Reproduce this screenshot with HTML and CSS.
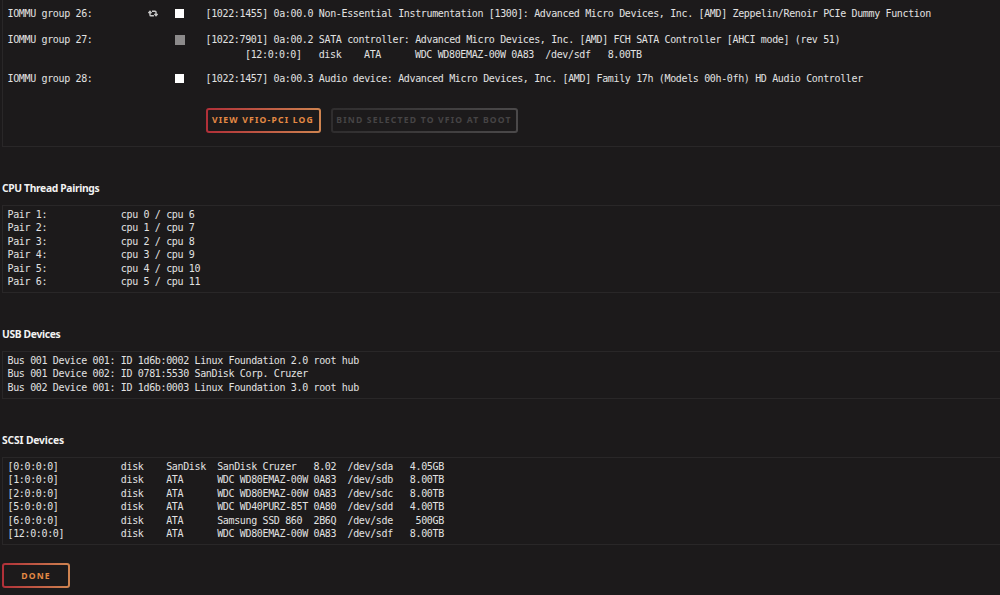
FILE: index.html
```
<!DOCTYPE html>
<html lang="en">
<head>
    <meta charset="UTF-8">
    <meta name="viewport" content="width=device-width, initial-scale=1.0">
    <title>System Devices</title>
    <link rel="stylesheet" href="styles.css">
</head>
<body>
    <div class="panel iommu">
        <div class="group">
            <span>IOMMU group 26:</span>
            <svg class="reset" viewBox="0 0 10 7">
                <path d="M2 1.4v3.5q0 .9.9.9h3M.4 3.1 2 1.3l1.6 1.8M4 1.2h3q1 0 1 .9v3M6.4 3.9 8 5.7l1.6-1.8"/>
            </svg>
            <span class="check"></span>
            <pre>[1022:1455] 0a:00.0 Non-Essential Instrumentation [1300]: Advanced Micro Devices, Inc. [AMD] Zeppelin/Renoir PCIe Dummy Function</pre>
        </div>
        <div class="group">
            <span>IOMMU group 27:</span>
            <span></span>
            <span class="check disabled"></span>
            <pre>[1022:7901] 0a:00.2 SATA controller: Advanced Micro Devices, Inc. [AMD] FCH SATA Controller [AHCI mode] (rev 51)</pre>
            <pre class="drive">[12:0:0:0]   disk    ATA      WDC WD80EMAZ-00W 0A83  /dev/sdf   8.00TB</pre>
        </div>
        <div class="group">
            <span>IOMMU group 28:</span>
            <span></span>
            <span class="check"></span>
            <pre>[1022:1457] 0a:00.3 Audio device: Advanced Micro Devices, Inc. [AMD] Family 17h (Models 00h-0fh) HD Audio Controller</pre>
        </div>
        <div class="buttons">
            <button class="btn log-btn">VIEW VFIO-PCI LOG</button>
            <button class="btn bind-btn" disabled>BIND SELECTED TO VFIO AT BOOT</button>
        </div>
    </div>

    <h2>CPU Thread Pairings</h2>
    <pre class="panel">
Pair 1:             cpu 0 / cpu 6
Pair 2:             cpu 1 / cpu 7
Pair 3:             cpu 2 / cpu 8
Pair 4:             cpu 3 / cpu 9
Pair 5:             cpu 4 / cpu 10
Pair 6:             cpu 5 / cpu 11</pre>

    <h2>USB Devices</h2>
    <pre class="panel usb">
Bus 001 Device 001: ID 1d6b:0002 Linux Foundation 2.0 root hub
Bus 001 Device 002: ID 0781:5530 SanDisk Corp. Cruzer
Bus 002 Device 001: ID 1d6b:0003 Linux Foundation 3.0 root hub</pre>

    <h2 class="scsi">SCSI Devices</h2>
    <pre class="panel">
[0:0:0:0]           disk    SanDisk  SanDisk Cruzer   8.02  /dev/sda   4.05GB
[1:0:0:0]           disk    ATA      WDC WD80EMAZ-00W 0A83  /dev/sdb   8.00TB
[2:0:0:0]           disk    ATA      WDC WD80EMAZ-00W 0A83  /dev/sdc   8.00TB
[5:0:0:0]           disk    ATA      WDC WD40PURZ-85T 0A80  /dev/sdd   4.00TB
[6:0:0:0]           disk    ATA      Samsung SSD 860  2B6Q  /dev/sde    500GB
[12:0:0:0]          disk    ATA      WDC WD80EMAZ-00W 0A83  /dev/sdf   8.00TB</pre>

    <button class="btn done-btn">DONE</button>
</body>
</html>
```

FILE: styles.css
```
* {
    box-sizing: border-box;
}
body {
    margin: 0;
    padding-left: 2px;
    height: 595px;
    overflow: hidden;
    background-color: #1c1a1b;
    color: #e2e2e2;
    font-family: "DejaVu Sans Mono", monospace;
    font-size: 10px;
    letter-spacing: -0.354px;
    line-height: 13.4px;
}
pre {
    margin: 0;
    font: inherit;
}
.panel {
    border: 1px solid #292728;
    width: 1010px;
    height: 88px;
    padding: 2px 4.5px;
}
.usb {
    height: 48px;
}
h2 {
    margin: 0;
    height: 58px;
    padding-top: 34px;
    font-family: "Noto Sans", sans-serif;
    font-size: 10.3px;
    font-weight: bold;
    letter-spacing: -0.34px;
    line-height: 14px;
    color: #f2f2f2;
}
.scsi {
    letter-spacing: -0.15px;
}
.iommu {
    height: 147px;
    border-top: none;
    padding-top: 7px;
}
.group {
    display: grid;
    grid-template-columns: 140.5px 26.5px 31px 1fr;
    align-items: center;
    margin-bottom: 12.5px;
}
.drive {
    grid-column: 4;
    padding: 2px 0 0 39.5px;
    margin-bottom: -2px;
}
.reset {
    width: 10px;
    height: 7px;
    fill: none;
    stroke: #c9c9c9;
    stroke-width: 1.4;
}
.check {
    width: 9px;
    height: 9px;
    background: #fff;
}
.check.disabled {
    width: 10px;
    height: 10px;
    background: #8c8a8b;
}
.buttons {
    display: flex;
    gap: 10px;
    margin: 22.2px 0 0 198px;
}
.btn {
    height: 25px;
    padding: 0;
    border: 2px solid transparent;
    border-radius: 3px;
    background: linear-gradient(#1c1a1b, #1c1a1b) padding-box, linear-gradient(90deg, #b02f38, #cf8450) border-box;
    color: #e58a45;
    font-family: "Noto Sans", sans-serif;
    font-size: 8.6px;
    font-weight: bold;
    letter-spacing: 1.2px;
    white-space: nowrap;
}
.log-btn {
    width: 115px;
}
.bind-btn {
    width: 187px;
    background: linear-gradient(#1c1a1b, #1c1a1b) padding-box, linear-gradient(90deg, #2f2d2e, #4b494a) border-box;
    color: #464445;
}
.done-btn {
    display: block;
    width: 68px;
    margin-top: 18px;
}
```
